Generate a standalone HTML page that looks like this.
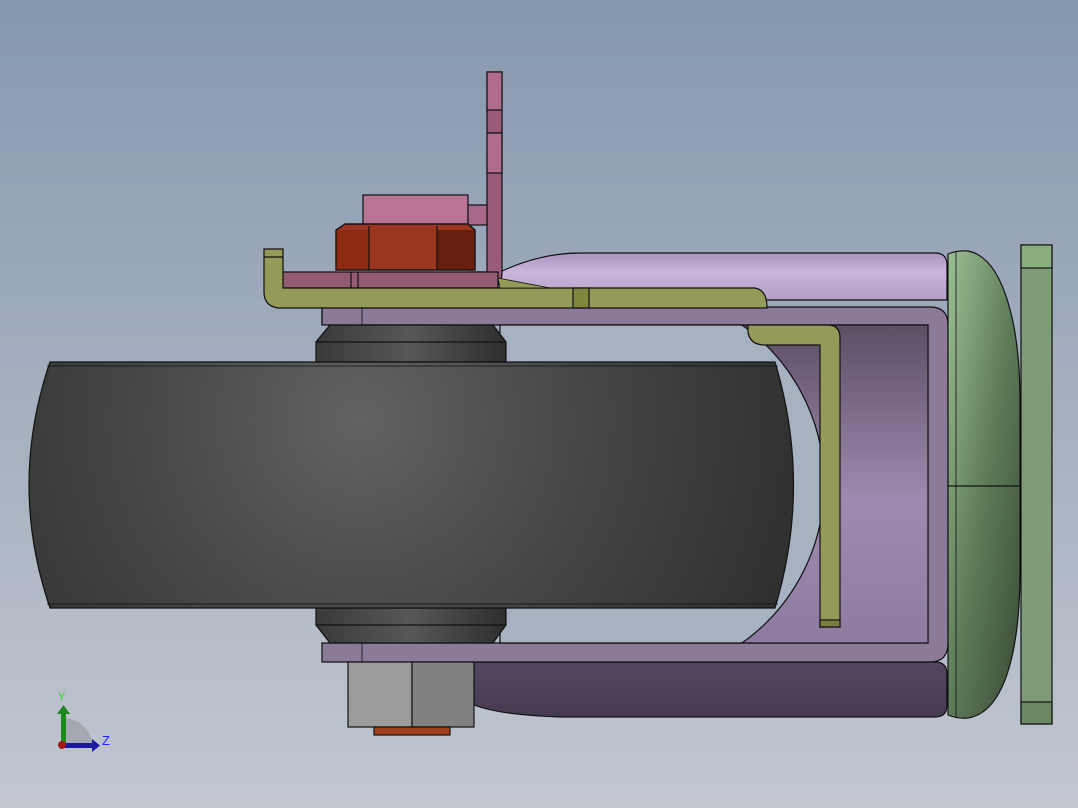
<!DOCTYPE html>
<html><head><meta charset="utf-8"><style>
html,body{margin:0;padding:0;width:1078px;height:808px;overflow:hidden}
svg{display:block}
</style></head><body>
<svg width="1078" height="808" viewBox="0 0 1078 808" xmlns="http://www.w3.org/2000/svg" stroke="#111" stroke-width="1.2">
<defs>
<linearGradient id="bg" x1="0" y1="0" x2="0" y2="1"><stop offset="0" stop-color="#8698ae"/><stop offset="1" stop-color="#c2c7d0"/></linearGradient>
<radialGradient id="wh" cx="360" cy="420" r="450" gradientUnits="userSpaceOnUse"><stop offset="0" stop-color="#626262"/><stop offset="0.5" stop-color="#464646"/><stop offset="1" stop-color="#303030"/></radialGradient>
<linearGradient id="hub" x1="0" x2="1"><stop offset="0" stop-color="#3a3a3a"/><stop offset="0.5" stop-color="#575757"/><stop offset="1" stop-color="#2e2e2e"/></linearGradient>
<linearGradient id="inner" x1="0" y1="0" x2="0" y2="1"><stop offset="0" stop-color="#5c4e66"/><stop offset="0.55" stop-color="#9e8aae"/><stop offset="1" stop-color="#8e7ca0"/></linearGradient>
<linearGradient id="topc" x1="0" y1="0" x2="0" y2="1"><stop offset="0" stop-color="#a894bc"/><stop offset="0.4" stop-color="#cbb6dc"/><stop offset="1" stop-color="#b09ec4"/></linearGradient>
<linearGradient id="botc" x1="0" y1="0" x2="0" y2="1"><stop offset="0" stop-color="#544660"/><stop offset="1" stop-color="#463a50"/></linearGradient>
<linearGradient id="dome" x1="0" y1="0" x2="1" y2="1"><stop offset="0" stop-color="#9cbf94"/><stop offset="0.5" stop-color="#5e7c58"/><stop offset="1" stop-color="#3a4a36"/></linearGradient>
</defs>
<rect width="1078" height="808" fill="url(#bg)" stroke="none"/>

<path d="M474 662 H935 Q947 662 947 674 V705 Q947 717 935 717 H560 Q500 715 474 705 Z" fill="url(#botc)"/>
<path d="M500 272 Q540 253 580 253 H935 Q947 253 947 265 V300 H500 Z" fill="url(#topc)"/>

<path d="M322 307 H930 Q948 307 948 325 V643 Q948 662 930 662 H322 V643 H928 V325 H322 Z" fill="#8b7a98"/>
<rect x="500" y="325" width="428" height="318" fill="url(#inner)"/>
<path d="M500 325 H742 A195 195 0 0 1 742 643 H500 Z" fill="#a6b1c2" stroke="#111"/>
<line x1="322" y1="307" x2="322" y2="325"/><line x1="362" y1="307" x2="362" y2="325" stroke-width="0.8"/>
<line x1="362" y1="643" x2="362" y2="662" stroke-width="0.8"/>

<path d="M330 325 H493 L506 342 V362 H316 V342 Z" fill="url(#hub)"/>
<line x1="316" y1="342" x2="506" y2="342"/>
<path d="M316 608 H506 V625 L493 643 H330 L316 625 Z" fill="url(#hub)"/>
<line x1="316" y1="625" x2="506" y2="625"/>

<path d="M50 362 H775 Q812 485 775 608 H50 Q8 485 50 362 Z" fill="url(#wh)"/>
<line x1="47" y1="366" x2="778" y2="366" stroke-width="0.8"/>
<line x1="47" y1="604" x2="778" y2="604" stroke-width="0.8"/>

<path d="M748 325 H828 Q840 325 840 338 V627 H820 V345 H765 Q750 345 748 332 Z" fill="#949a58"/>
<rect x="820" y="620" width="20" height="7" fill="#7a7f40"/>

<path d="M487 72 H502 V272 Q502 290 485 290 H470 V272 H487 Z" fill="#9a5a78"/>
<rect x="487" y="72" width="15" height="38" fill="#b06c8c"/>
<line x1="487" y1="133" x2="502" y2="133"/><rect x="487" y="133" width="15" height="40" fill="#b06c8c"/>
<rect x="363" y="195" width="105" height="30" fill="#b87494"/>
<rect x="468" y="205" width="19" height="20" fill="#a8688a"/>
<rect x="282" y="272" width="216" height="16" fill="#955a74"/>
<line x1="351" y1="272" x2="351" y2="288"/><line x1="358" y1="272" x2="358" y2="288"/>
<path d="M336 230 L345 224 H468 L475 230 V270 H336 Z" fill="#9a3520"/>
<rect x="336" y="230" width="33" height="40" fill="#8c2a12" stroke="none"/>
<rect x="437" y="230" width="38" height="40" fill="#6a1e0e" stroke="none"/>
<path d="M336 230 L345 224 H468 L475 230 V270 H336 Z" fill="none"/>
<line x1="369" y1="226" x2="369" y2="270"/><line x1="437" y1="226" x2="437" y2="270"/>

<path d="M264 249 H283 V288 H755 Q767 290 767 308 H278 Q264 306 264 292 Z" fill="#949a58"/>
<line x1="264" y1="257" x2="283" y2="257"/>
<rect x="573" y="288" width="16" height="20" fill="#80863e"/>
<path d="M498 278 L550 288 H500 Z" fill="#949a58" stroke-width="0.8"/>

<path d="M948 254 Q958 250 968 251 C1005 258 1020 330 1020 400 V570 C1020 650 1005 712 968 718 Q958 719 948 715 Z" fill="url(#dome)"/>
<line x1="956" y1="252" x2="956" y2="718" stroke-width="0.8"/>
<line x1="948" y1="486" x2="1020" y2="486"/>
<rect x="1021" y="245" width="31" height="479" fill="#7f9c77"/>
<rect x="1021" y="245" width="31" height="23" fill="#8aae80"/>
<rect x="1021" y="702" width="31" height="22" fill="#6a8862"/>

<rect x="348" y="662" width="64" height="65" fill="#9b9b9b"/>
<rect x="412" y="662" width="62" height="65" fill="#818181"/>
<rect x="374" y="727" width="76" height="8" fill="#a0401e"/>

<g stroke="none">
<path d="M63 718 A30 30 0 0 1 93 748 H63 Z" fill="#a4a8b0"/>
<rect x="61" y="712" width="5" height="34" fill="#1a8a1a"/>
<path d="M57 714 L63.5 705 L70 714 Z" fill="#1a8a1a"/>
<rect x="63" y="743" width="30" height="5" fill="#1a1aa0"/>
<path d="M92 739 L100 745.5 L92 752 Z" fill="#1a1aa0"/>
<circle cx="62" cy="745" r="4" fill="#a01818"/>
<text x="58" y="700" font-family="Liberation Sans, sans-serif" font-size="11" fill="#22dd22">Y</text>
<text x="102" y="745" font-family="Liberation Sans, sans-serif" font-size="13" fill="#2222ff">Z</text>
</g>
</svg>
</body></html>
